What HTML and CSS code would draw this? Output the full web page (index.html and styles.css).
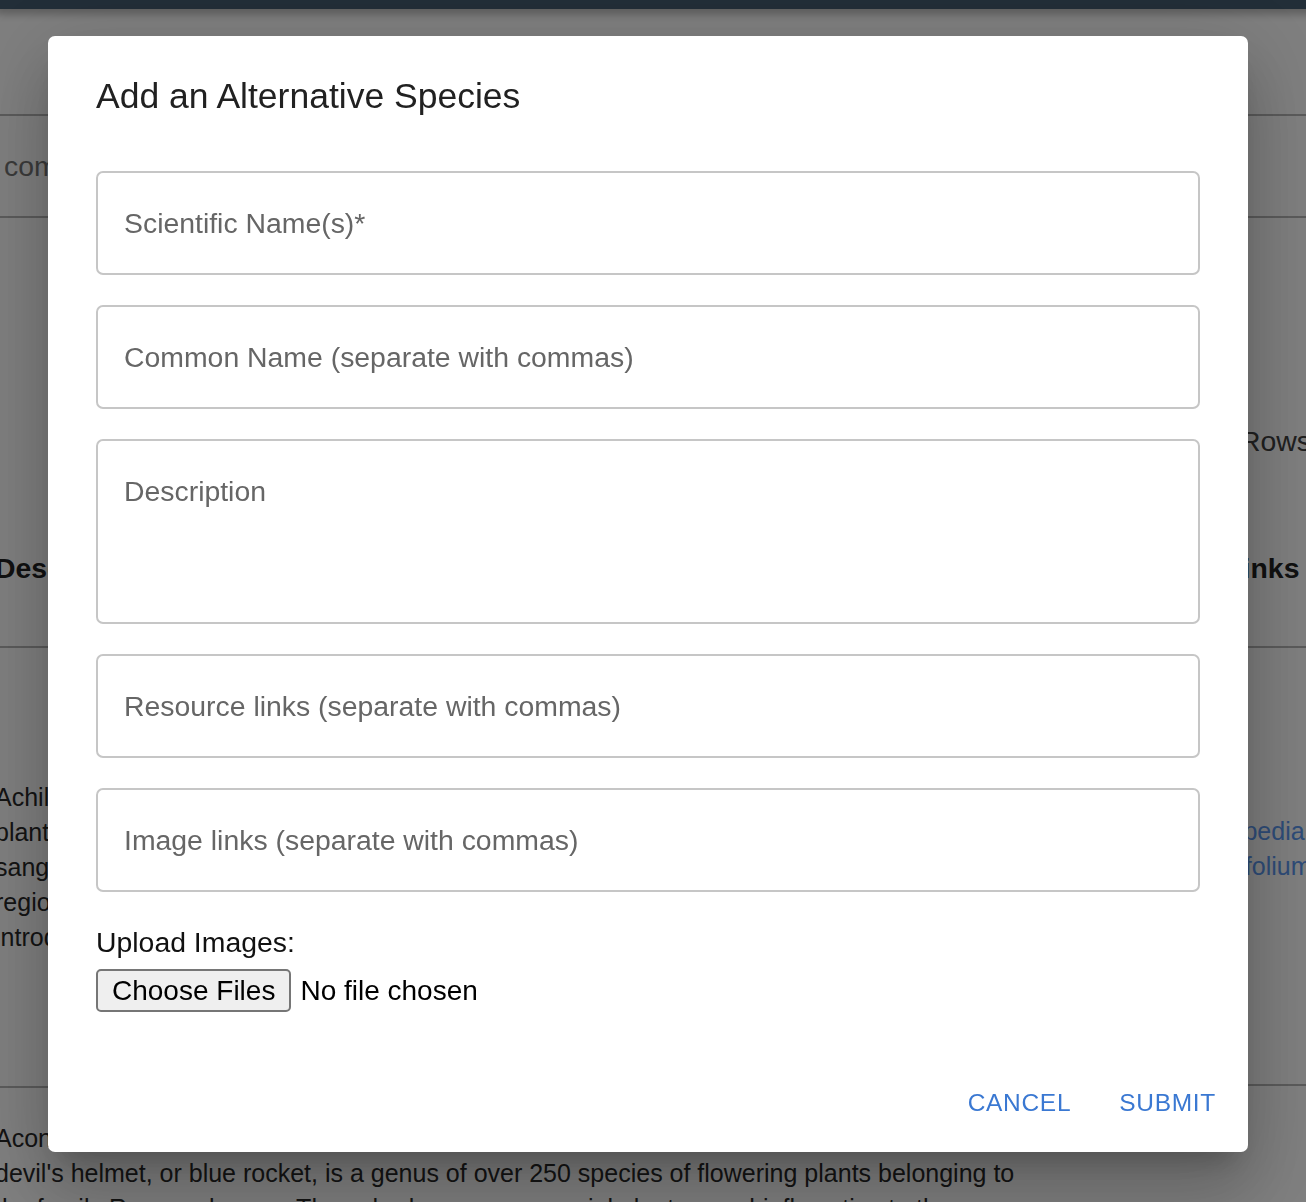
FILE: index.html
```html
<!DOCTYPE html>
<html lang="en">
<head>
<meta charset="utf-8">
<title>Add an Alternative Species</title>
<link rel="stylesheet" href="styles.css">
</head>
<body>
<div class="page">
  <header class="appbar"></header>
  <div class="toolbar"></div>
  <div class="search"><span class="search-text">common name</span></div>
  <div class="pager"><span class="pager-text">Rows per page: 10</span></div>
  <div class="table">
    <div class="cell head">Description</div>
    <div class="cell head head-links">Resource Links</div>
    <div class="cell desc row1">Achillea millefolium, commonly known as yarrow or common yarrow, is a flowering<br>plant in the family Asteraceae. Other common names include old man's pepper, devil's<br>sanguinary, milfoil, soldier's woundwort, and thousand seal. It is native to temperate<br>regions of the Northern Hemisphere in Asia, Europe, and North America. It has been<br>introduced as a feed for livestock in places such as New Zealand and Australia.</div>
    <div class="cell links row1 links1"><a class="link">https://en.wikipedia.org/wiki/<br>Achillea_millefolium</a></div>
    <div class="cell desc row2">Aconitum, also known as aconite, monkshood, wolf's-bane, leopard's bane, mousebane, women's bane,<br>devil's helmet, or blue rocket, is a genus of over 250 species of flowering plants belonging to<br>the family Ranunculaceae. These herbaceous perennial plants are chiefly native to the</div>
    <div class="cell links row2 links2"><a class="link">https://en.wikipedia.org/wiki/<br>Aconitum</a></div>
  </div>
</div>

<div class="backdrop">
  <div class="dialog" role="dialog" aria-labelledby="dlg-title">
    <h2 class="dialog-title" id="dlg-title">Add an Alternative Species</h2>
    <div class="dialog-content">
      <div class="fields">
        <input class="field" type="text" placeholder="Scientific Name(s)*">
        <input class="field" type="text" placeholder="Common Name (separate with commas)">
        <textarea class="field field-multi" rows="3" placeholder="Description"></textarea>
        <input class="field" type="text" placeholder="Resource links (separate with commas)">
        <input class="field" type="text" placeholder="Image links (separate with commas)">
      </div>
      <div class="upload">
        <div class="upload-label">Upload Images:</div>
        <div class="file-row">
          <span class="file-btn">Choose Files</span>
          <span class="file-status">No file chosen</span>
        </div>
      </div>
    </div>
    <div class="dialog-actions">
      <button class="action" type="button">Cancel</button>
      <button class="action" type="button">Submit</button>
    </div>
  </div>
</div>
</body>
</html>
```
FILE: styles.css
```css
html, body {
  margin: 0;
  padding: 0;
  overflow: hidden;
  background: #ffffff;
  font-family: "Liberation Sans", Arial, Helvetica, sans-serif;
}

.page {
  width: 1500px;
  margin-left: -5px;
  color: #282828;
}

.appbar {
  height: 9px;
  background: #445c70;
  box-shadow: 0 4px 10px rgba(0, 0, 0, 0.35);
}

.toolbar {
  height: 105px;
  border-bottom: 2px solid #b6b6b6;
}

.search {
  height: 100px;
  border-bottom: 2px solid #b6b6b6;
  display: flex;
  align-items: center;
  padding-left: 9px;
  font-size: 28.4px;
  color: #757575;
}

.pager {
  height: 273px;
  box-sizing: border-box;
  display: flex;
  align-items: flex-end;
  padding: 0 0 30px 1245px;
  font-size: 28.4px;
  line-height: 40px;
  color: #404040;
  white-space: nowrap;
}

.table {
  display: grid;
  grid-template-columns: 1093px 407px;
}

.cell {
  white-space: nowrap;
  overflow: hidden;
}

.head {
  height: 155px;
  border-bottom: 2px solid #b6b6b6;
  display: flex;
  align-items: center;
  padding-left: 0;
  font-size: 28.4px;
  font-weight: 700;
  color: #222;
}

.desc, .links {
  font-size: 25px;
  line-height: 35px;
  padding-left: 0;
}

.row1 {
  height: 438px;
  border-bottom: 2px solid #b6b6b6;
  display: flex;
  align-items: center;
}

.row2 {
  padding-top: 33px;
  height: 200px;
}

.links {
  padding-left: 4px;
}

.links1 {
  box-sizing: border-box;
  padding-bottom: 35px;
}

.links2 {
  padding-top: 130px;
}

.link {
  color: #5c98f0;
}

/* ---------- Dialog ---------- */

.backdrop {
  position: fixed;
  inset: 0;
  z-index: 10;
  background: rgba(0, 0, 0, 0.5);
  display: flex;
  align-items: flex-start;
  justify-content: flex-start;
  padding: 36px 0 0 48px;
}

.dialog {
  width: 1200px;
  background: #ffffff;
  border-radius: 7px;
  box-shadow:
    0 19px 26px -12px rgba(0, 0, 0, 0.2),
    0 42px 66px 5px rgba(0, 0, 0, 0.14),
    0 16px 80px 14px rgba(0, 0, 0, 0.12);
  display: flex;
  flex-direction: column;
}

.dialog-title {
  margin: 0;
  padding: 32px 48px 0;
  font-size: 35.5px;
  font-weight: 400;
  line-height: 56px;
  color: #212121;
}

.dialog-content {
  padding: 47px 48px 0;
}

.fields {
  display: flex;
  flex-direction: column;
  gap: 30px;
}

.field {
  box-sizing: border-box;
  width: 100%;
  height: 104px;
  margin: 0;
  padding: 0 26px;
  border: 2px solid #c6c6c6;
  border-radius: 7px;
  background: #fff;
  font-family: "Liberation Sans", Arial, Helvetica, sans-serif;
  font-size: 28.4px;
  line-height: 40px;
  color: #212121;
  outline: none;
  display: block;
}

.field::placeholder {
  color: #666666;
  opacity: 1;
}

.field-multi {
  height: 185px;
  padding: 30px 26px;
  resize: none;
  overflow: hidden;
}

.upload {
  margin-top: 30px;
}

.upload-label {
  font-size: 28.4px;
  line-height: 40px;
  color: #111;
}

.file-row {
  margin-top: 7px;
  display: flex;
  align-items: center;
  gap: 9px;
}

.file-btn {
  box-sizing: border-box;
  height: 43px;
  padding: 0 14px;
  border: 2px solid #767676;
  border-radius: 5px;
  background: #efefef;
  font-size: 28px;
  line-height: 39px;
  color: #000;
}

.file-status {
  font-size: 28px;
  line-height: 39px;
  color: #000;
}

.dialog-actions {
  display: flex;
  justify-content: flex-end;
  gap: 16px;
  padding: 58px 16px 18px;
}

.action {
  margin: 0;
  padding: 10.5px 16px;
  border: 0;
  background: none;
  font-family: "Liberation Sans", Arial, Helvetica, sans-serif;
  font-size: 24.5px;
  font-weight: 400;
  line-height: 43px;
  letter-spacing: 0.7px;
  text-transform: uppercase;
  color: #3a78d2;
  cursor: pointer;
}
```
